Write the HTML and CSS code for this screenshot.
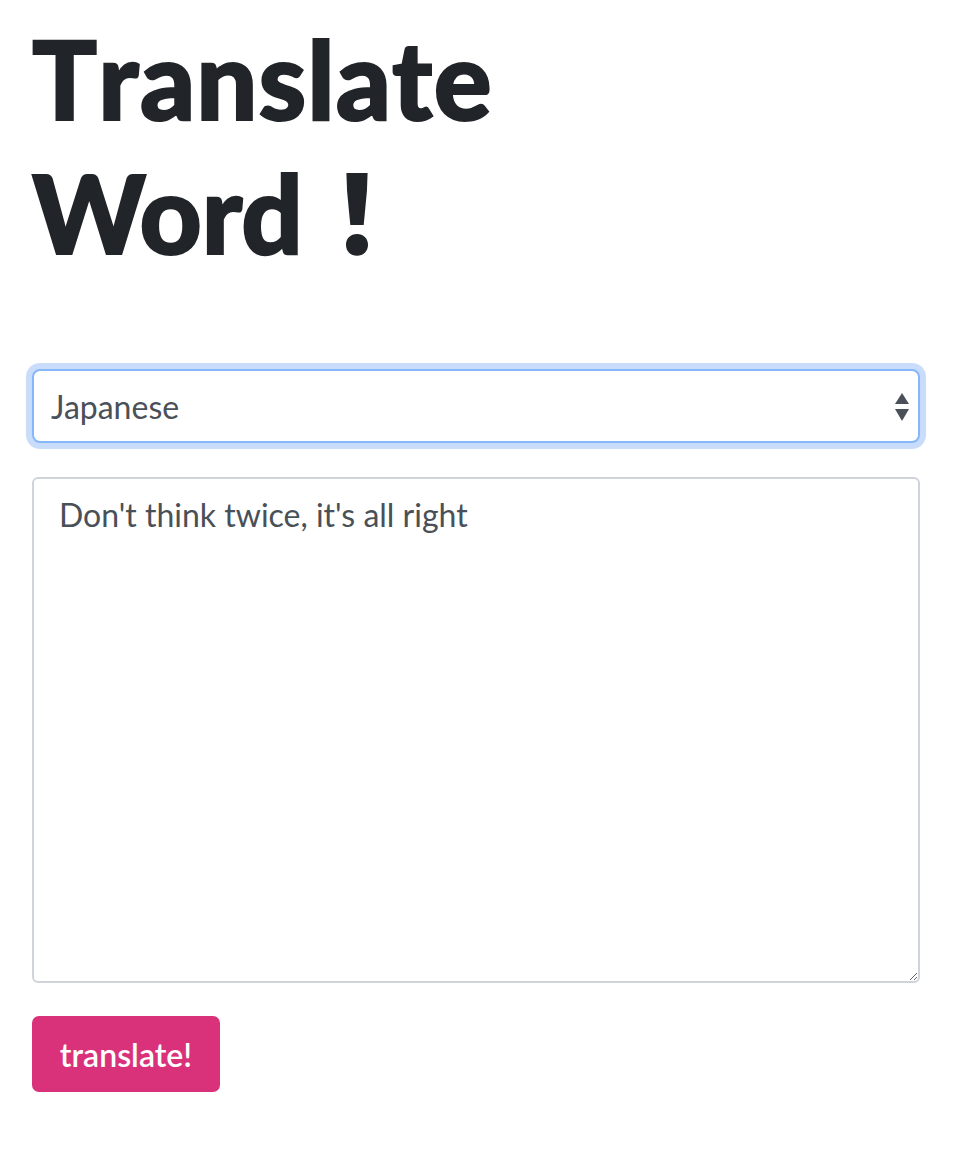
FILE: index.html
```html
<!DOCTYPE html>
<html lang="en">
<head>
<meta charset="utf-8">
<title>Translate Word</title>
<link rel="stylesheet" href="styles.css">
</head>
<body>
<main class="page">
  <h1 class="title"><span class="line-1">Translate</span><br><span class="line-2">Word</span><span class="bang">！</span></h1>
  <form class="form">
    <div class="select-wrap">
      <select class="field select">
        <option>Japanese</option>
      </select>
      <svg class="select-arrows" width="16" height="28" viewBox="0 0 16 28" aria-hidden="true">
        <path d="M8 0 L15 11 L1 11 Z" fill="#495057"/>
        <path d="M1 16 L15 16 L8 28 Z" fill="#495057"/>
      </svg>
    </div>
    <textarea class="field textarea">Don't think twice, it's all right</textarea>
    <div><button type="button" class="btn">translate!</button></div>
  </form>
</main>
</body>
</html>
```
FILE: styles.css
```css
html, body {
  margin: 0;
  padding: 0;
  background: #fff;
}
body {
  font-family: Lato, "Noto Sans CJK JP", sans-serif;
  color: #212529;
}
.page {
  width: 888px;
  padding: 0 0 0 32px;
}
.title {
  margin: 11px 0 0 0;
  font-size: 108px;
  line-height: 134px;
  font-weight: 900;
  color: #212529;
  -webkit-text-stroke: 2px #212529;
}
.line-1 {
  font-kerning: none;
  letter-spacing: 1px;
}
.line-2 {
  font-kerning: normal;
}
.bang {
  font-family: "Noto Sans CJK JP", sans-serif;
  line-height: 0;
  -webkit-text-stroke: 0;
}
.form {
  margin-top: 90px;
  display: flex;
  flex-direction: column;
}
.select-wrap {
  position: relative;
}
.field {
  box-sizing: border-box;
  width: 888px;
  font-family: Lato, sans-serif;
  font-size: 32px;
  color: #495057;
  background: #fff;
  border: 2px solid #ced4da;
  border-radius: 8px;
  margin: 0;
}
.select {
  display: block;
  height: 74px;
  padding: 0 17px;
  -webkit-appearance: none;
  appearance: none;
  border-color: #86b7fb;
  box-shadow: 0 0 0 6px #c9ddfb;
  outline: none;
}
.select-arrows {
  position: absolute;
  right: 10px;
  top: 24px;
  pointer-events: none;
}
.textarea {
  display: block;
  margin-top: 34px;
  height: 506px;
  padding: 17px 25px;
  line-height: 1.2;
  resize: vertical;
  border-radius: 6px;
}
.btn {
  margin-top: 33px;
  width: 188px;
  height: 76px;
  border: 0;
  border-radius: 7px;
  background: #d9327a;
  color: #fff;
  font-family: Lato, sans-serif;
  font-size: 32px;
  font-weight: 600;
  padding: 0;
}
```
